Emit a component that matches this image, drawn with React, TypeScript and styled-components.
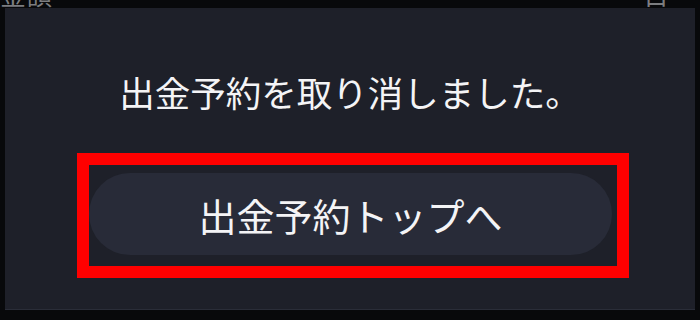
import React from 'react';
import styled, { createGlobalStyle } from 'styled-components';

const GlobalStyle = createGlobalStyle`
  html, body {
    margin: 0;
    padding: 0;
    background: #08090b;
  }
  body {
    font-family: "Noto Sans CJK JP", "Noto Sans", sans-serif;
  }
`;

const Page = styled.div`
  position: relative;
  width: 700px;
  height: 320px;
  overflow: hidden;
  background: #08090b;
`;

// list header behind the modal, mostly hidden by it
const HeaderRow = styled.div`
  display: flex;
  justify-content: space-between;
  align-items: flex-end;
  margin-top: -19px;
  padding: 0 31px 0 0;
`;

const HeaderLabel = styled.span`
  font-size: 26px;
  line-height: 1;
  color: #7c7d80;
`;

const Modal = styled.div`
  position: absolute;
  top: 8px;
  left: 5px;
  right: 5px;
  bottom: 10px;
  display: flex;
  flex-direction: column;
  background: #1e2029;
  border-bottom: 1px solid #2a2d38;
`;

const Message = styled.p`
  margin: 0;
  padding-top: 60px;
  text-align: center;
  font-size: 35.5px;
  line-height: 48px;
  color: #f4f4f6;
`;

const HighlightFrame = styled.div`
  align-self: flex-start;
  margin: 37px 0 0 72px;
  width: 523px;
  border: 12px solid #ff0000;
  padding: 8px 5px 11px 0;
  box-sizing: content-box;
`;

const ActionButton = styled.button`
  display: flex;
  align-items: center;
  justify-content: center;
  width: 100%;
  height: 82px;
  border: none;
  border-radius: 41px;
  background: #282b38;
  color: #f4f4f6;
  font-family: inherit;
  font-size: 38px;
  padding: 0;
  cursor: pointer;
`;

export default function App() {
  return (
    <>
      <GlobalStyle />
      <Page>
        <HeaderRow>
          <HeaderLabel>金額</HeaderLabel>
          <HeaderLabel>日</HeaderLabel>
        </HeaderRow>
        <Modal>
          <Message>出金予約を取り消しました。</Message>
          <HighlightFrame>
            <ActionButton>出金予約トップへ</ActionButton>
          </HighlightFrame>
        </Modal>
      </Page>
    </>
  );
}
